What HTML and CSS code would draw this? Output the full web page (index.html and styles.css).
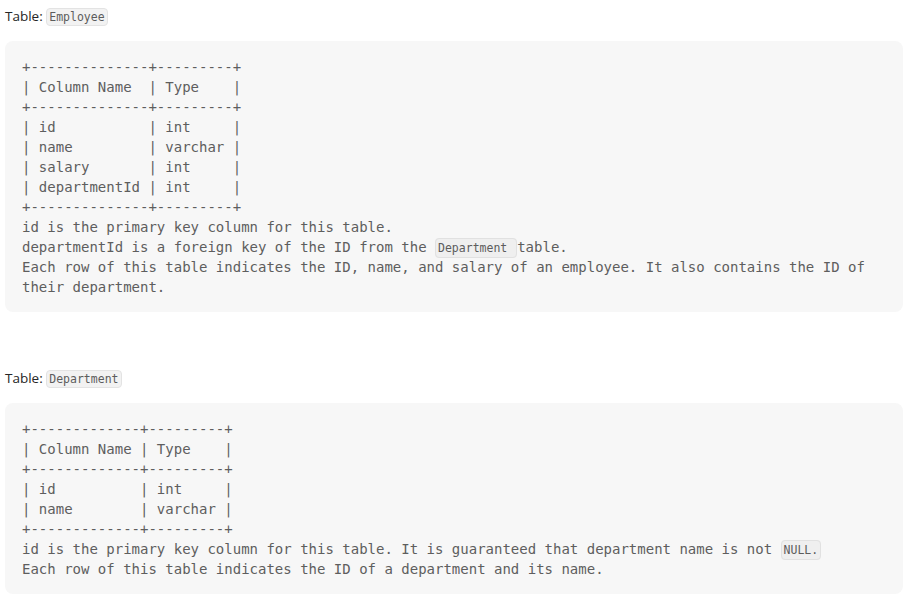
FILE: index.html
```html
<!DOCTYPE html>
<html>
<head>
<meta charset="utf-8">
<link rel="stylesheet" href="styles.css">
</head>
<body>
<div class="page">
  <p class="label">Table: <code class="chip">Employee</code></p>
  <pre class="block">+--------------+---------+
| Column Name  | Type    |
+--------------+---------+
| id           | int     |
| name         | varchar |
| salary       | int     |
| departmentId | int     |
+--------------+---------+
id is the primary key column for this table.
departmentId is a foreign key of the ID from the <code class="chip-inline">Department </code>table.
Each row of this table indicates the ID, name, and salary of an employee. It also contains the ID of
their department.</pre>
  <p class="label label-second">Table: <code class="chip">Department</code></p>
  <pre class="block">+-------------+---------+
| Column Name | Type    |
+-------------+---------+
| id          | int     |
| name        | varchar |
+-------------+---------+
id is the primary key column for this table. It is guaranteed that department name is not <code class="chip-inline">NULL.</code>
Each row of this table indicates the ID of a department and its name.</pre>
</div>
</body>
</html>
```
FILE: styles.css
```css
html, body {
  margin: 0;
  padding: 0;
  background: #ffffff;
}

.page {
  padding: 4px 10px 0 5px;
}

.label {
  margin: 0;
  font-family: "Open Sans", "Liberation Sans", sans-serif;
  font-size: 13.5px;
  line-height: 24px;
  color: #262626;
  height: 24px;
}

.label-second {
  margin-top: 54px;
}

.chip {
  font-family: "DejaVu Sans Mono", monospace;
  font-size: 11.5px;
  line-height: 16px;
  color: #5c5c5c;
  background: #f2f2f2;
  border: 1px solid #e3e3e3;
  border-radius: 4px;
  padding: 0 2px;
  display: inline-block;
  vertical-align: middle;
}

.block {
  margin: 13px 0 0 0;
  padding: 16px 17px 15px 17px;
  background: #f7f7f7;
  border-radius: 8px;
  font-family: "DejaVu Sans Mono", monospace;
  font-size: 14px;
  line-height: 20px;
  color: #5e5e5e;
  white-space: pre-wrap;
}

.chip-inline {
  font-family: "DejaVu Sans Mono", monospace;
  font-size: 11.5px;
  line-height: 1;
  color: #5c5c5c;
  background: #efefef;
  border: 1px solid #e1e1e1;
  border-radius: 4px;
  padding: 2px 2px;
}
```
